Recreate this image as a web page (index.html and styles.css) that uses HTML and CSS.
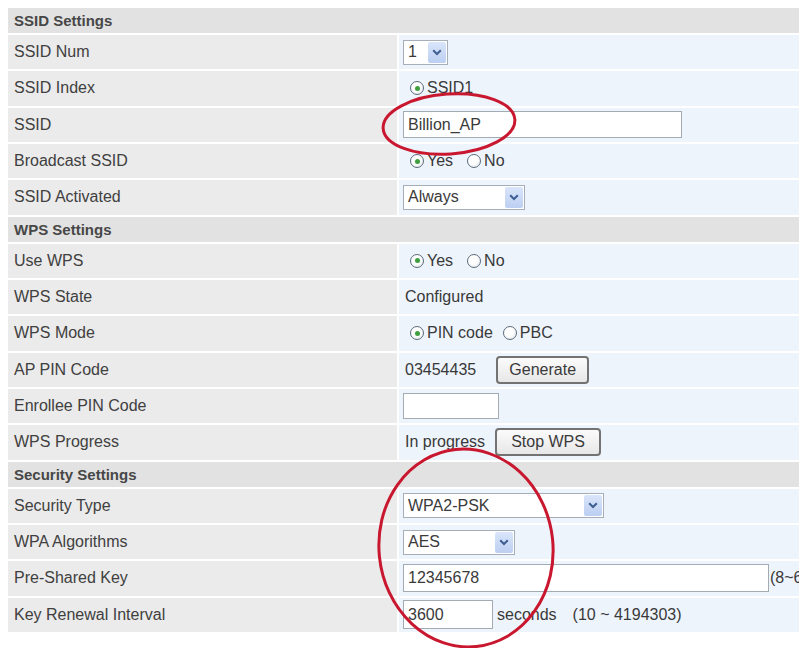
FILE: index.html
```html
<!DOCTYPE html>
<html>
<head>
<meta charset="utf-8">
<title>Wireless Settings</title>
<link rel="stylesheet" href="styles.css">
</head>
<body>
<div class="form">
  <div class="sec">SSID Settings</div>

  <div class="lbl">SSID Num</div>
  <div class="val">
    <div class="sel sel-num"><span class="sel-text">1</span><span class="sel-btn"><svg width="10" height="7" viewBox="0 0 10 7"><path d="M1.2 1.2 L5 5 L8.8 1.2" fill="none" stroke="#3f5f93" stroke-width="2"/></svg></span></div>
  </div>

  <div class="lbl">SSID Index</div>
  <div class="val"><span class="opt"><span class="radio on"></span>SSID1</span></div>

  <div class="lbl">SSID</div>
  <div class="val"><input class="txt txt-ssid" type="text" value="Billion_AP"></div>

  <div class="lbl">Broadcast SSID</div>
  <div class="val"><span class="opt"><span class="radio on"></span>Yes</span><span class="opt opt2"><span class="radio"></span>No</span></div>

  <div class="lbl">SSID Activated</div>
  <div class="val">
    <div class="sel sel-always"><span class="sel-text">Always</span><span class="sel-btn"><svg width="10" height="7" viewBox="0 0 10 7"><path d="M1.2 1.2 L5 5 L8.8 1.2" fill="none" stroke="#3f5f93" stroke-width="2"/></svg></span></div>
  </div>

  <div class="sec">WPS Settings</div>

  <div class="lbl">Use WPS</div>
  <div class="val"><span class="opt"><span class="radio on"></span>Yes</span><span class="opt opt2"><span class="radio"></span>No</span></div>

  <div class="lbl">WPS State</div>
  <div class="val"><span class="plain">Configured</span></div>

  <div class="lbl">WPS Mode</div>
  <div class="val"><span class="opt"><span class="radio on"></span>PIN code</span><span class="opt opt2 opt-pbc"><span class="radio"></span>PBC</span></div>

  <div class="lbl">AP PIN Code</div>
  <div class="val"><span class="plain">03454435</span><button class="btn btn-gen" type="button">Generate</button></div>

  <div class="lbl">Enrollee PIN Code</div>
  <div class="val"><input class="txt txt-pin" type="text" value=""></div>

  <div class="lbl">WPS Progress</div>
  <div class="val"><span class="plain">In progress</span><button class="btn btn-stop" type="button">Stop WPS</button></div>

  <div class="sec">Security Settings</div>

  <div class="lbl">Security Type</div>
  <div class="val">
    <div class="sel sel-sec"><span class="sel-text">WPA2-PSK</span><span class="sel-btn"><svg width="10" height="7" viewBox="0 0 10 7"><path d="M1.2 1.2 L5 5 L8.8 1.2" fill="none" stroke="#3f5f93" stroke-width="2"/></svg></span></div>
  </div>

  <div class="lbl">WPA Algorithms</div>
  <div class="val">
    <div class="sel sel-aes"><span class="sel-text">AES</span><span class="sel-btn"><svg width="10" height="7" viewBox="0 0 10 7"><path d="M1.2 1.2 L5 5 L8.8 1.2" fill="none" stroke="#3f5f93" stroke-width="2"/></svg></span></div>
  </div>

  <div class="lbl">Pre-Shared Key</div>
  <div class="val"><input class="txt txt-psk" type="text" value="12345678"><span class="plain note-psk">(8~63 characters)</span></div>

  <div class="lbl">Key Renewal Interval</div>
  <div class="val"><input class="txt txt-renew" type="text" value="3600"><span class="plain note-sec">seconds</span><span class="plain note-range">(10 ~ 4194303)</span></div>
</div>

<svg class="marks" width="801" height="648" viewBox="0 0 801 648">
  <ellipse cx="449" cy="124" rx="66" ry="30" transform="rotate(-4 449 124)" fill="none" stroke="#c8172f" stroke-width="3"/>
  <ellipse cx="466" cy="548" rx="87" ry="99" transform="rotate(-6 466 548)" fill="none" stroke="#c8172f" stroke-width="3"/>
</svg>
</body>
</html>
```

FILE: styles.css
```css
html, body {
  margin: 0;
  padding: 0;
  overflow: hidden;
  background: #ffffff;
}

body {
  position: relative;
  width: 801px;
  height: 648px;
  font-family: "Liberation Sans", Arial, sans-serif;
  font-size: 16px;
  color: #3b3b3b;
}

.form {
  display: grid;
  grid-template-columns: 389px 400px;
  column-gap: 2px;
  row-gap: 2px;
  width: 791px;
  margin: 8px 0 0 8px;
}

.sec {
  grid-column: 1 / -1;
  height: 25px;
  background: #e2e2e2;
  font-weight: bold;
  font-size: 15px;
  color: #474747;
  padding-left: 6px;
  display: flex;
  align-items: center;
}

.lbl {
  height: 34.33px;
  background: #ebebeb;
  padding-left: 6px;
  display: flex;
  align-items: center;
  color: #404040;
}

.val {
  height: 34.33px;
  background: #eef4fc;
  padding-left: 4px;
  display: flex;
  align-items: center;
  white-space: nowrap;
  overflow: hidden;
  color: #393939;
}

.val > * {
  flex-shrink: 0;
}

.plain {
  padding-left: 2px;
}

/* fake drop-down boxes */
.sel {
  display: flex;
  box-sizing: border-box;
  height: 25px;
  border: 1px solid #a6aeb9;
  background: #ffffff;
}

.sel-text {
  flex: 1;
  display: flex;
  align-items: center;
  padding-left: 4px;
  color: #3a3a3a;
}

.sel-btn {
  width: 18px;
  margin: 1px;
  border-radius: 2px;
  background: linear-gradient(#d9e5fa, #bccff2);
  display: flex;
  align-items: center;
  justify-content: center;
}

.sel-num { width: 45px; }
.sel-always { width: 122px; }
.sel-sec { width: 201px; }
.sel-aes { width: 112px; }

/* text inputs */
.txt {
  box-sizing: border-box;
  height: 27px;
  border: 1px solid #a3abb5;
  background: #ffffff;
  font-family: "Liberation Sans", Arial, sans-serif;
  font-size: 16px;
  color: #3a3a3a;
  padding: 0 4px;
  margin: 0;
  outline: none;
}

.txt-ssid { width: 279px; }
.txt-pin { width: 96px; height: 26px; }
.txt-psk { width: 366px; height: 28px; }
.txt-renew { width: 90px; height: 29px; }

.note-psk { padding-left: 1px; }
.note-sec { padding-left: 4px; }
.note-range { padding-left: 16px; }

/* radios */
.opt {
  display: inline-flex;
  align-items: center;
}

.opt2 {
  margin-left: 14px;
}

.opt-pbc {
  margin-left: 10px;
}

.radio {
  box-sizing: border-box;
  width: 14px;
  height: 14px;
  margin: 0 3px 0 7px;
  border: 1px solid #5b6c7c;
  border-radius: 50%;
  background: radial-gradient(circle at 40% 35%, #ffffff 40%, #dfe3e6 100%);
  display: inline-flex;
  align-items: center;
  justify-content: center;
}

.opt2 .radio {
  margin-left: 0;
}

.radio.on::after {
  content: "";
  width: 5px;
  height: 5px;
  border-radius: 50%;
  background: #3d9f3d;
}

/* buttons */
.btn {
  box-sizing: border-box;
  height: 28px;
  padding: 0;
  border: 2px solid #737373;
  border-radius: 4px;
  background: linear-gradient(#fbfbfb, #e7e7e7);
  font-family: "Liberation Sans", Arial, sans-serif;
  font-size: 16px;
  color: #3a3a3a;
}

.btn-gen {
  width: 93px;
  margin-left: 20px;
}

.btn-stop {
  width: 106px;
  margin-left: 10px;
}

/* annotation marks drawn over the form */
.marks {
  position: absolute;
  left: 0;
  top: 0;
  pointer-events: none;
}
```
